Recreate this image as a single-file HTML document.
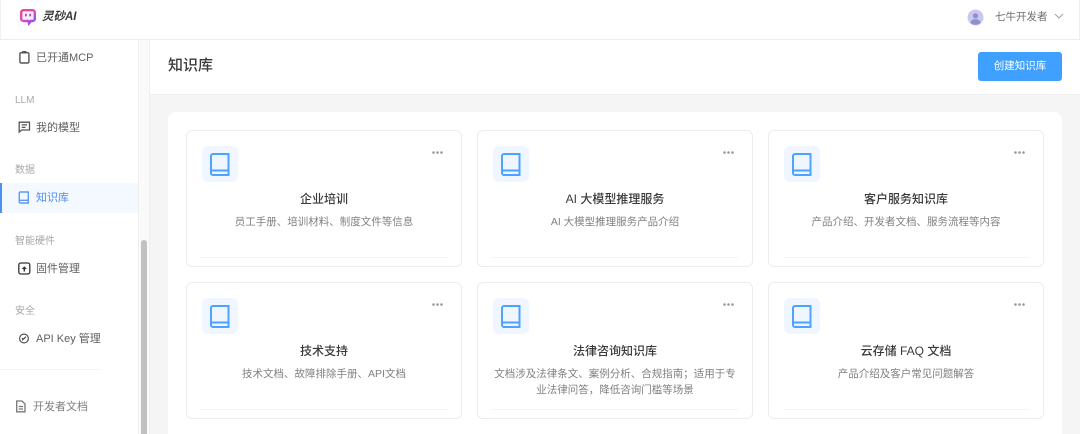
<!DOCTYPE html>
<html lang="zh">
<head>
<meta charset="utf-8">
<style>
*{box-sizing:border-box;margin:0;padding:0}
html,body{width:1080px;height:434px;overflow:hidden;background:#f5f5f5;font-family:"Liberation Sans","Noto Sans CJK SC",sans-serif}
.abs,.abs *{position:absolute}
.t{white-space:nowrap;line-height:16px}
#top{left:0;top:0;width:1080px;height:40px;background:#fff;border-bottom:1px solid #eeeeee;border-left:1px solid #f2f2f2;border-right:1px solid #eeeeee}
#side{left:0;top:40px;width:139px;height:394px;background:#fff;border-right:1px solid #efefef}
#track{left:139px;top:40px;width:11px;height:394px;background:#fafafa;border-right:1px solid #efefef}
#thumb{left:141px;top:240px;width:6px;height:194px;background:#c1c1c1;border-radius:3px 3px 0 0}
#head{left:150px;top:40px;width:930px;height:55px;background:#fff;border-bottom:1px solid #f0f0f0}
#panel{left:168px;top:112px;width:894px;height:322px;background:#fff;border-radius:8px 8px 0 0}
.lbl{font-size:10px;color:#a8a8a8;left:15px}
.it{font-size:11px;color:#5f5f5f;left:36px}
.card{width:276px;height:137px;background:#fff;border:1px solid #ececec;border-radius:6px}
.ib{left:15px;top:15px;width:36px;height:36px;background:#f0f6ff;border-radius:6px}
.ib svg{left:0;top:0}
.dots{left:245px;top:20px;width:11px;height:3px}
.ti{left:0;top:60px;width:274px;text-align:center;font-size:12px;color:#3a3a3a;line-height:16px;font-weight:500}
.de{left:14px;top:83px;width:246px;text-align:center;font-size:10.5px;color:#808080;line-height:16px}
.ln{left:14px;top:126px;width:246px;height:1px;background:#f4f4f4}
</style>
</head>
<body class="abs">
<div id="side"></div>
<div id="track"></div>
<div id="thumb"></div>
<div id="head"></div>
<div id="panel"></div>

<div id="top"></div>
<svg style="left:19px;top:8px" width="18" height="18" viewBox="0 0 18 18">
<defs><linearGradient id="g" x1="0" y1="0" x2="0.8" y2="1"><stop offset="0" stop-color="#f0468c"/><stop offset="0.6" stop-color="#d64cc8"/><stop offset="1" stop-color="#8a50f0"/></linearGradient></defs>
<path d="M4.500 2.200H13.500A2.300 2.300 0 0 1 15.800 4.500V10.700A2.300 2.300 0 0 1 13.500 13H11.700L10 15.300L9.500 13H4.500A2.300 2.300 0 0 1 2.200 10.700V4.500A2.300 2.300 0 0 1 4.500 2.200Z" fill="#f6f0fc" stroke="url(#g)" stroke-width="2.400"/>
<rect x="6" y="5.800" width="1.700" height="2.600" rx="0.500" fill="#b8409f"/><rect x="10.300" y="5.800" width="1.700" height="2.600" rx="0.500" fill="#b8409f"/>
</svg>
<div class="t" style="left:42px;top:9px;font-size:11.500px;font-weight:700;font-style:italic;color:#3a3a3a">灵砂AI</div>

<svg style="left:967px;top:9px" width="17" height="17" viewBox="0 0 17 17">
<circle cx="8.500" cy="8.500" r="8" fill="#c9c9ef"/><circle cx="8.500" cy="6.800" r="2.600" fill="#8f8fcb"/><path d="M3.500 14C4 11 6 10.300 8.500 10.300S13 11 13.500 14A8 8 0 0 1 3.500 14Z" fill="#8f8fcb"/>
</svg>
<div class="t" style="left:995px;top:9px;font-size:10.500px;color:#6e6e6e">七牛开发者</div>
<svg style="left:1054px;top:13px" width="10" height="7" viewBox="0 0 10 7"><path d="M1 1L5 5L9 1" fill="none" stroke="#999" stroke-width="0.900"/></svg>

<svg style="left:18px;top:50px" width="14" height="15" viewBox="0 0 14 15" fill="none" stroke="#555" stroke-width="1.400"><rect x="1.900" y="2.700" width="9" height="10.300" rx="1.200"/><rect x="4.200" y="1" width="4.200" height="2.500" fill="#555" stroke="none"/></svg>
<div class="t it" style="top:50px">已开通MCP</div>
<div class="t lbl" style="top:93px">LLM</div>
<svg style="left:18px;top:120px" width="13" height="14" viewBox="0 0 13 14" fill="none" stroke="#555" stroke-width="1.300"><path d="M1.200 2.200H11.500V10H3.700L1.200 12Z"/><path d="M3.700 4.900H9M3.700 7.400H7.500"/></svg>
<div class="t it" style="top:120px">我的模型</div>
<div class="t lbl" style="top:163px">数据</div>
<div style="left:0;top:183px;width:138px;height:30px;background:#f4f8ff"></div>
<div style="left:0;top:183px;width:2px;height:30px;background:#4a90f5"></div>
<svg style="left:18px;top:190px" width="12" height="14" viewBox="0 0 12 14" fill="none" stroke="#5b9bf5" stroke-width="1.400"><path d="M2.500 2H10.300V13H2.500A1.200 1.200 0 0 1 1.300 11.800V3.200A1.200 1.200 0 0 1 2.500 2Z"/><path d="M1.300 10.300H10.300"/></svg>
<div class="t it" style="top:190px;color:#4a90f0">知识库</div>
<div class="t lbl" style="top:234px">智能硬件</div>
<svg style="left:18px;top:262px" width="13" height="14" viewBox="0 0 13 14" fill="none" stroke="#333" stroke-width="1.300"><rect x="0.800" y="1" width="11" height="11" rx="2"/><path d="M6.300 9.500V5.500" stroke-width="1.500"/><path d="M3.700 7L6.300 4.200L8.900 7Z" fill="#333" stroke="none"/></svg>
<div class="t it" style="top:261px">固件管理</div>
<div class="t lbl" style="top:304px">安全</div>
<svg style="left:18px;top:332px" width="13" height="13" viewBox="0 0 13 13" fill="none" stroke="#444" stroke-width="1.100"><circle cx="6" cy="6.500" r="4.400"/><path d="M4.200 8.300L8 4.700"/><path d="M4 6L5.400 7.200"/></svg>
<div class="t it" style="top:331px">API Key 管理</div>
<div style="left:0;top:369px;width:100px;height:1px;background:#f5f5f5"></div>
<svg style="left:15px;top:399px" width="12" height="14" viewBox="0 0 12 14" fill="none" stroke="#777" stroke-width="1.300"><path d="M1.700 2H7L10 5V12.800H1.700Z"/><path d="M3.700 7.500H8M3.700 10H8"/></svg>
<div class="t it" style="left:33px;top:399px;color:#7e7e7e">开发者文档</div>

<div class="t" style="left:168px;top:56px;font-size:15px;line-height:20px;color:#3a3a3a;font-weight:500">知识库</div>
<div class="t" style="left:978px;top:52px;width:84px;height:29px;background:#40a0ff;border-radius:3px;color:#fff;font-size:10.500px;line-height:29px;text-align:center">创建知识库</div>

<div class="card" style="left:186px;top:130px"><div class="ib"><svg width="36" height="36" viewBox="0 0 36 36" fill="none" stroke="#4da3ff" stroke-width="2"><path d="M11 8H26.500V29H11A2 2 0 0 1 9 27V10A2 2 0 0 1 11 8Z"/><path d="M9 24.500H26.500"/></svg></div><svg class="dots" viewBox="0 0 11 3" fill="#999"><circle cx="1.500" cy="1.500" r="1.300"/><circle cx="5.500" cy="1.500" r="1.300"/><circle cx="9.500" cy="1.500" r="1.300"/></svg><div class="ti">企业培训</div><div class="de">员工手册、培训材料、制度文件等信息</div><div class="ln"></div></div>

<div class="card" style="left:477px;top:130px"><div class="ib"><svg width="36" height="36" viewBox="0 0 36 36" fill="none" stroke="#4da3ff" stroke-width="2"><path d="M11 8H26.500V29H11A2 2 0 0 1 9 27V10A2 2 0 0 1 11 8Z"/><path d="M9 24.500H26.500"/></svg></div><svg class="dots" viewBox="0 0 11 3" fill="#999"><circle cx="1.500" cy="1.500" r="1.300"/><circle cx="5.500" cy="1.500" r="1.300"/><circle cx="9.500" cy="1.500" r="1.300"/></svg><div class="ti">AI 大模型推理服务</div><div class="de">AI 大模型推理服务产品介绍</div><div class="ln"></div></div>

<div class="card" style="left:768px;top:130px"><div class="ib"><svg width="36" height="36" viewBox="0 0 36 36" fill="none" stroke="#4da3ff" stroke-width="2"><path d="M11 8H26.500V29H11A2 2 0 0 1 9 27V10A2 2 0 0 1 11 8Z"/><path d="M9 24.500H26.500"/></svg></div><svg class="dots" viewBox="0 0 11 3" fill="#999"><circle cx="1.500" cy="1.500" r="1.300"/><circle cx="5.500" cy="1.500" r="1.300"/><circle cx="9.500" cy="1.500" r="1.300"/></svg><div class="ti">客户服务知识库</div><div class="de">产品介绍、开发者文档、服务流程等内容</div><div class="ln"></div></div>

<div class="card" style="left:186px;top:282px"><div class="ib"><svg width="36" height="36" viewBox="0 0 36 36" fill="none" stroke="#4da3ff" stroke-width="2"><path d="M11 8H26.500V29H11A2 2 0 0 1 9 27V10A2 2 0 0 1 11 8Z"/><path d="M9 24.500H26.500"/></svg></div><svg class="dots" viewBox="0 0 11 3" fill="#999"><circle cx="1.500" cy="1.500" r="1.300"/><circle cx="5.500" cy="1.500" r="1.300"/><circle cx="9.500" cy="1.500" r="1.300"/></svg><div class="ti">技术支持</div><div class="de">技术文档、故障排除手册、API文档</div><div class="ln"></div></div>

<div class="card" style="left:477px;top:282px"><div class="ib"><svg width="36" height="36" viewBox="0 0 36 36" fill="none" stroke="#4da3ff" stroke-width="2"><path d="M11 8H26.500V29H11A2 2 0 0 1 9 27V10A2 2 0 0 1 11 8Z"/><path d="M9 24.500H26.500"/></svg></div><svg class="dots" viewBox="0 0 11 3" fill="#999"><circle cx="1.500" cy="1.500" r="1.300"/><circle cx="5.500" cy="1.500" r="1.300"/><circle cx="9.500" cy="1.500" r="1.300"/></svg><div class="ti">法律咨询知识库</div><div class="de">文档涉及法律条文、案例分析、合规指南；适用于专业法律问答，降低咨询门槛等场景</div><div class="ln"></div></div>

<div class="card" style="left:768px;top:282px"><div class="ib"><svg width="36" height="36" viewBox="0 0 36 36" fill="none" stroke="#4da3ff" stroke-width="2"><path d="M11 8H26.500V29H11A2 2 0 0 1 9 27V10A2 2 0 0 1 11 8Z"/><path d="M9 24.500H26.500"/></svg></div><svg class="dots" viewBox="0 0 11 3" fill="#999"><circle cx="1.500" cy="1.500" r="1.300"/><circle cx="5.500" cy="1.500" r="1.300"/><circle cx="9.500" cy="1.500" r="1.300"/></svg><div class="ti">云存储 FAQ 文档</div><div class="de">产品介绍及客户常见问题解答</div><div class="ln"></div></div>
</body>
</html>
